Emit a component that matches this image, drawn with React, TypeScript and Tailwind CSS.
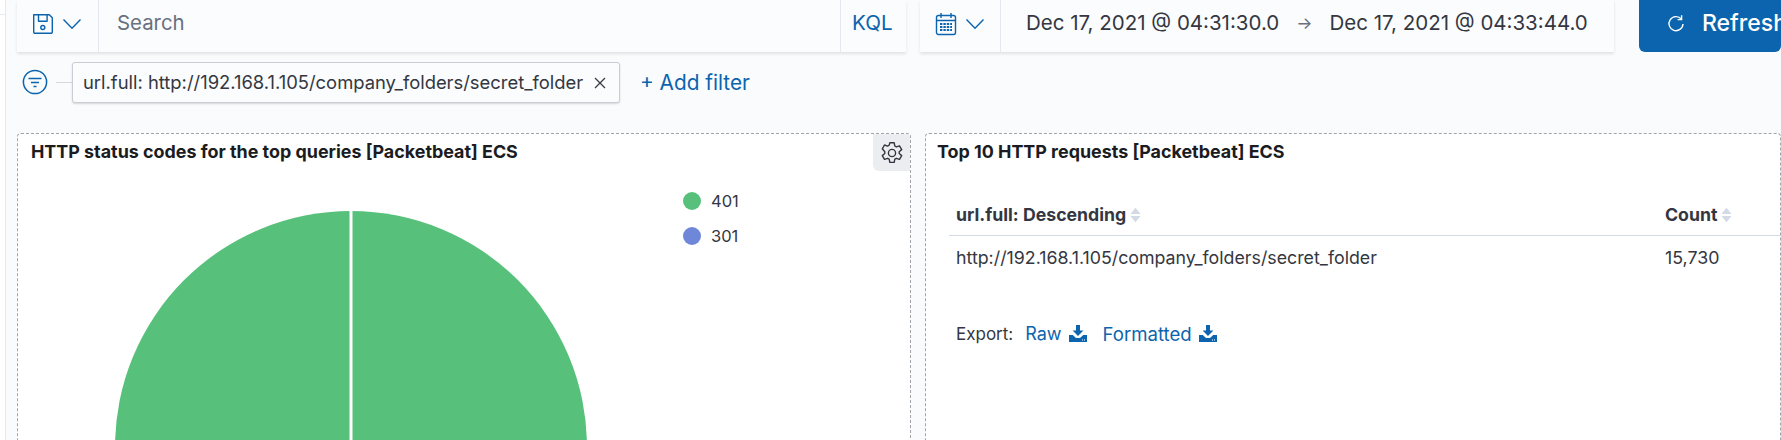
import React from "react";

const Chevron = () => (
  <svg className="shrink-0" width="20" height="12" viewBox="0 0 20 12" fill="none" stroke="#0b64ad" strokeWidth="1.4"><path d="M1.5 1.5 10 10.2l8.5-8.7" /></svg>
);

const Save = () => (
  <svg className="shrink-0" width="22" height="22" viewBox="0 0 22 22" fill="none" stroke="#0b64ad" strokeWidth="1.4" strokeLinejoin="round">
    <path d="M1.7 1.7h15.6l3 3v14.4a1.2 1.2 0 0 1-1.2 1.2H2.9a1.2 1.2 0 0 1-1.2-1.2z" />
    <path d="M6.5 1.7v6.6h8.6V1.7" />
    <circle cx="10.8" cy="14.5" r="2" />
  </svg>
);

const Calendar = () => (
  <svg className="shrink-0" width="22" height="24" viewBox="0 0 22 24" fill="none" stroke="#0b64ad" strokeWidth="1.4">
    <rect x="1.5" y="3.5" width="19" height="19" rx="2" />
    <path d="M1.5 8.5h19M6 1v5M16 1v5" />
    <path stroke="#0b64ad" strokeWidth="2" strokeDasharray="2.4 1" d="M5 12h12M5 15h12M5 18h12" />
  </svg>
);

const FilterIcon = () => (
  <svg className="shrink-0" width="26" height="26" viewBox="0 0 26 26" fill="none" stroke="#0b64ad" strokeWidth="1.5">
    <circle cx="13" cy="13" r="11.6" />
    <path d="M6.5 9.5h13M9 13.5h8M11.5 17.5h3" />
  </svg>
);

const Gear = () => (
  <svg className="shrink-0" width="24" height="24" viewBox="0 0 24 24" fill="none" stroke="#343741" strokeWidth="1.4" strokeLinejoin="round">
    <path d="M9.8 1.8h4.4l.6 3.2 1.6.9 3.1-1.1 2.2 3.8-2.5 2.1v1.8l2.5 2.1-2.2 3.8-3.1-1.1-1.6.9-.6 3.2H9.8l-.6-3.2-1.6-.9-3.1 1.1-2.2-3.8 2.5-2.1v-1.8L2.3 7.8l2.2-3.8 3.1 1.1 1.6-.9z" />
    <circle cx="12" cy="12" r="3.6" />
  </svg>
);

const Refresh = () => (
  <svg className="shrink-0" width="18" height="20" viewBox="0 0 18 20" fill="none" stroke="#ffffff" strokeWidth="1.4">
    <path d="M14.4 5.2A7 7 0 1 0 16 10" />
    <path d="M14.6 1.2v4.4h-4" />
  </svg>
);

const Download = () => (
  <svg className="shrink-0" width="18" height="18" viewBox="0 0 18 18" fill="#0b64ad">
    <path d="M7 0h4v5.5h3.4L9 11 3.6 5.5H7z" />
    <path d="M0 10h3.8L7 13h4l3.2-3H18v7H0z" />
    <path fill="#ffffff" d="M13 14.5h1v1h-1zM15 14.5h1v1h-1z" />
  </svg>
);

const Sort = () => (
  <svg className="shrink-0" width="11" height="16" viewBox="0 0 12 16" fill="#d3dae6">
    <path d="M6 0l5.5 7H.5zM6 16l5.5-7H.5z" />
  </svg>
);

export default function App() {
  return (
    <div className="w-[1781px] h-[440px] overflow-hidden flex bg-[#fafbfd] text-[#343741] font-['Inter','Liberation_Sans',sans-serif]">
      <div className="w-[6px] shrink-0 bg-white border-r border-[#e6e9f0]">
        <div className="h-[15px] border-b border-[#e6e9f0]" />
      </div>
      <div className="flex-1 min-w-0 pl-[11px]">
        <div className="flex h-[52px]">
          <div className="w-[889px] shrink-0 flex bg-[#fbfcfd] shadow-[0_2px_3px_rgba(0,0,0,0.1)]">
            <div className="w-[82px] flex items-center justify-center gap-[8px] border-r border-[#e4e8ef] pb-[4px] pr-[1px]">
              <Save />
              <Chevron />
            </div>
            <div className="flex-1 flex items-center pl-[18px] pb-[5px] text-[20.4px] text-[#69707d]">Search</div>
            <div className="w-[66px] flex items-center pl-[11px] pb-[5px] border-l border-[#e4e8ef] text-[20.6px] text-[#0b64ad]">KQL</div>
          </div>
          <div className="w-[694px] ml-[14px] shrink-0 flex bg-[#fbfcfd] shadow-[0_2px_3px_rgba(0,0,0,0.1)]">
            <div className="w-[81px] flex items-center justify-center gap-[8px] border-r border-[#e4e8ef] pb-[5px] pr-[1px]">
              <Calendar />
              <Chevron />
            </div>
            <div className="flex-1 flex items-center pl-[25px] pb-[5px] text-[20.5px] whitespace-nowrap text-[#343741]">
              <span>Dec 17, 2021 @ 04:31:30.0</span>
              <span className="mx-[17px] text-[#69707d] text-[17px]">→</span>
              <span>Dec 17, 2021 @ 04:33:44.0</span>
            </div>
          </div>
          <div className="ml-[25px] flex-1 min-w-0 -mt-2 bg-[#0b64ad] rounded-b-[6px] flex items-center gap-[17px] pl-[28px] pt-[3px] text-white text-[23px] font-medium whitespace-nowrap overflow-hidden">
            <Refresh />
            <span>Refresh</span>
          </div>
        </div>
        <div className="flex items-center mt-[10px] h-[41px]">
          <span className="ml-[5px] mt-[-1px] flex"><FilterIcon /></span>
          <div className="w-[16px] h-px bg-[#d3dae6] ml-[8px]" />
          <div className="w-[548px] h-[41px] shrink-0 flex items-center justify-between pl-[10px] pr-[13px] bg-[#fbfcfd] border border-[#c9ced6] rounded-[3px] shadow-[0_1px_2px_rgba(0,0,0,0.15)] text-[18.4px]">
            <span className="whitespace-nowrap">url.full: http://192.168.1.105/company_folders/secret_folder</span>
            <svg className="shrink-0" width="12" height="12" viewBox="0 0 12 12" stroke="#343741" strokeWidth="1.2"><path d="M1 1l10 10M11 1 1 11" /></svg>
          </div>
          <div className="ml-[20px] text-[20.8px] text-[#0b64ad]">+ Add filter</div>
        </div>
        <div className="flex mt-[30px] gap-[14px]">
          <div className="relative w-[894px] h-[400px] shrink-0 bg-white border border-dashed border-[#a0a4ab] rounded-[4px] overflow-hidden">
            <div className="absolute right-0 top-0 w-[37px] h-[37px] bg-[#ebedf0] rounded-bl-[6px] flex items-center justify-center">
              <Gear />
            </div>
            <div className="pl-[13px] pt-[8px] text-[17.9px] leading-[20px] font-bold text-[#1a1c21]">HTTP status codes for the top queries [Packetbeat] ECS</div>
            <div className="flex">
              <svg className="ml-[97px] mt-[49px] shrink-0" width="472" height="472" viewBox="0 0 472 472">
                <circle cx="236" cy="236" r="236" fill="#57c17b" />
                <rect x="234.5" y="0" width="3" height="472" fill="#ffffff" />
              </svg>
              <div className="ml-[96px] mt-[27px] flex flex-col gap-[11px] text-[16.5px] leading-[24px]">
                <div className="flex items-center gap-[10px]">
                  <div className="w-[18px] h-[18px] rounded-full bg-[#57c17b]" />
                  <span>401</span>
                </div>
                <div className="flex items-center gap-[10px]">
                  <div className="w-[18px] h-[18px] rounded-full bg-[#6f87d8]" />
                  <span>301</span>
                </div>
              </div>
            </div>
          </div>
          <div className="flex-1 min-w-0 h-[400px] bg-white border border-dashed border-[#a0a4ab] rounded-[4px]">
            <div className="pl-[11px] pt-[8px] text-[17.9px] leading-[20px] font-bold text-[#1a1c21]">Top 10 HTTP requests [Packetbeat] ECS</div>
            <div className="ml-[23px] mt-[40px]">
              <div className="flex h-[34px] items-start border-b border-[#d3dae6] pl-[7px] pt-[1px] leading-[24px]">
                <div className="w-[709px] flex items-center gap-[4px] font-bold text-[17.7px]"><span>url.full: Descending</span><Sort /></div>
                <div className="flex items-center gap-[4px] font-bold text-[17.7px]"><span>Count</span><Sort /></div>
              </div>
              <div className="flex pl-[7px] pt-[10px] text-[17.8px] leading-[24px]">
                <div className="w-[709px]">http://192.168.1.105/company_folders/secret_folder</div>
                <div>15,730</div>
              </div>
              <div className="flex items-center pl-[7px] mt-[52px] text-[17px] leading-[24px]">
                <span>Export:</span>
                <span className="ml-[12px] text-[18px] text-[#0b64ad]">Raw</span>
                <span className="ml-[7px]"><Download /></span>
                <span className="ml-[16px] text-[18.6px] text-[#0b64ad]">Formatted</span>
                <span className="ml-[7px]"><Download /></span>
              </div>
            </div>
          </div>
        </div>
      </div>
    </div>
  );
}
